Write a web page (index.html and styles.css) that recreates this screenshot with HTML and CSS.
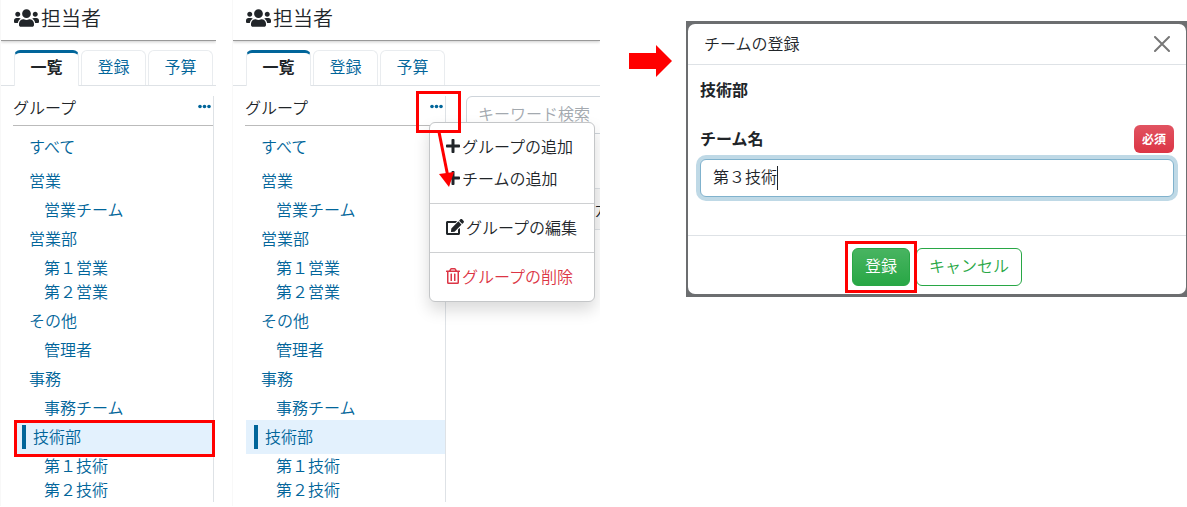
FILE: index.html
```html
<!DOCTYPE html>
<html lang="ja">
<head>
<meta charset="utf-8">
<title>担当者</title>
<link rel="stylesheet" href="styles.css">
</head>
<body>
<svg class="sprite" aria-hidden="true">
  <symbol id="users" viewBox="0 0 640 512"><path d="M96 224c35.300 0 64-28.700 64-64s-28.700-64-64-64-64 28.700-64 64 28.700 64 64 64zm448 0c35.300 0 64-28.700 64-64s-28.700-64-64-64-64 28.700-64 64 28.700 64 64 64zm32 32h-64c-17.600 0-33.500 7.100-45.100 18.600 40.300 22.100 68.900 62 75.100 109.400h66c17.700 0 32-14.300 32-32v-32c0-35.300-28.700-64-64-64zm-256 0c61.900 0 112-50.100 112-112S381.900 32 320 32 208 82.100 208 144s50.100 112 112 112zm76.800 32h-8.300c-20.800 10-43.900 16-68.500 16s-47.600-6-68.500-16h-8.300C179.600 288 128 339.600 128 403.200V432c0 26.500 21.500 48 48 48h288c26.500 0 48-21.500 48-48v-28.800c0-63.600-51.600-115.200-115.200-115.200zm-223.700-13.400C161.500 263.100 145.600 256 128 256H64c-35.300 0-64 28.700-64 64v32c0 17.700 14.300 32 32 32h65.900c6.300-47.400 34.900-87.300 75.200-109.400z"/></symbol>
  <symbol id="dots" viewBox="0 0 13 5"><circle cx="2" cy="2.500" r="1.800"/><circle cx="6.500" cy="2.500" r="1.800"/><circle cx="11" cy="2.500" r="1.800"/></symbol>
  <symbol id="plus" viewBox="0 0 448 512"><path d="M416 208H272V64c0-17.670-14.330-32-32-32h-32c-17.670 0-32 14.330-32 32v144H32c-17.670 0-32 14.330-32 32v32c0 17.670 14.330 32 32 32h144v144c0 17.670 14.330 32 32 32h32c17.670 0 32-14.330 32-32V304h144c17.670 0 32-14.330 32-32v-32c0-17.670-14.330-32-32-32z"/></symbol>
  <symbol id="edit" viewBox="0 0 576 512"><path d="M402.600 83.200l90.200 90.200c3.800 3.800 3.800 10 0 13.800L274.400 405.600l-92.800 10.300c-12.400 1.400-22.900-9.100-21.500-21.500l10.300-92.800L388.800 83.200c3.800-3.800 10-3.800 13.800 0zm162-22.900l-48.800-48.800c-15.200-15.200-39.900-15.200-55.200 0l-35.400 35.400c-3.800 3.800-3.800 10 0 13.800l90.200 90.200c3.800 3.800 10 3.800 13.800 0l35.400-35.400c15.200-15.300 15.200-40 0-55.200zM384 346.200V448H64V128h229.800c3.200 0 6.200-1.300 8.500-3.500l40-40c7.600-7.600 2.200-20.500-8.500-20.500H48C21.500 64 0 85.500 0 112v352c0 26.500 21.500 48 48 48h352c26.500 0 48-21.500 48-48V306.200c0-10.700-12.900-16-20.500-8.500l-40 40c-2.200 2.300-3.500 5.300-3.500 8.500z"/></symbol>
  <symbol id="trash" viewBox="0 0 448 512"><path d="M268 416h24a12 12 0 0 0 12-12V188a12 12 0 0 0-12-12h-24a12 12 0 0 0-12 12v216a12 12 0 0 0 12 12zM432 80h-82.410l-34-56.700A48 48 0 0 0 274.410 0H173.590a48 48 0 0 0-41.160 23.300L98.410 80H16A16 16 0 0 0 0 96v16a16 16 0 0 0 16 16h16v336a48 48 0 0 0 48 48h288a48 48 0 0 0 48-48V128h16a16 16 0 0 0 16-16V96a16 16 0 0 0-16-16zM171.840 50.910A6 6 0 0 1 177 48h94a6 6 0 0 1 5.150 2.910L293.610 80H154.390zM368 464H80V128h288zm-212-48h24a12 12 0 0 0 12-12V188a12 12 0 0 0-12-12h-24a12 12 0 0 0-12 12v216a12 12 0 0 0 12 12z"/></symbol>
</svg>
<main class="steps">
  <section class="panel panel-narrow">
    <header class="panel-head"><svg class="icon-users"><use href="#users"/></svg><h1>担当者</h1></header>
    <nav class="tabs"><a class="tab tab-active" href="#">一覧</a><a class="tab" href="#">登録</a><a class="tab" href="#">予算</a></nav>
    <div class="content">
      <aside class="sidebar">
        <div class="group-head"><h2>グループ</h2><button class="more" type="button" aria-label="メニュー"><svg class="icon-dots"><use href="#dots"/></svg></button></div>
        <ul class="tree">
          <li class="group"><a href="#">すべて</a></li>
          <li class="group"><a href="#">営業</a></li>
          <li class="team"><a href="#">営業チーム</a></li>
          <li class="group"><a href="#">営業部</a></li>
          <li class="team"><a href="#">第１営業</a></li>
          <li class="team"><a href="#">第２営業</a></li>
          <li class="group"><a href="#">その他</a></li>
          <li class="team"><a href="#">管理者</a></li>
          <li class="group"><a href="#">事務</a></li>
          <li class="team"><a href="#">事務チーム</a></li>
          <li class="group selected"><a href="#">技術部</a><span class="mark mark-row"></span></li>
          <li class="team"><a href="#">第１技術</a></li>
          <li class="team"><a href="#">第２技術</a></li>
        </ul>
      </aside>
    </div>
  </section>

  <section class="panel panel-wide">
    <header class="panel-head"><svg class="icon-users"><use href="#users"/></svg><h1>担当者</h1></header>
    <nav class="tabs"><a class="tab tab-active" href="#">一覧</a><a class="tab" href="#">登録</a><a class="tab" href="#">予算</a></nav>
    <div class="content">
      <aside class="sidebar">
        <div class="group-head">
          <h2>グループ</h2><button class="more" type="button" aria-label="メニュー"><svg class="icon-dots"><use href="#dots"/></svg></button>
          <div class="menu">
            <button type="button"><svg class="icon-14"><use href="#plus"/></svg>グループの追加</button>
            <button type="button"><svg class="icon-14"><use href="#plus"/></svg>チームの追加</button>
            <hr>
            <button type="button"><svg class="icon-18"><use href="#edit"/></svg>グループの編集</button>
            <hr>
            <button class="danger" type="button"><svg class="icon-14"><use href="#trash"/></svg>グループの削除</button>
          </div>
          <span class="mark mark-more"></span>
          <svg class="pointer" viewBox="0 0 20 58"><path d="M4 1 13 46" stroke="#f00" stroke-width="3"/><path d="M4 43 19 41 14 56z" fill="#f00"/></svg>
        </div>
        <ul class="tree">
          <li class="group"><a href="#">すべて</a></li>
          <li class="group"><a href="#">営業</a></li>
          <li class="team"><a href="#">営業チーム</a></li>
          <li class="group"><a href="#">営業部</a></li>
          <li class="team"><a href="#">第１営業</a></li>
          <li class="team"><a href="#">第２営業</a></li>
          <li class="group"><a href="#">その他</a></li>
          <li class="team"><a href="#">管理者</a></li>
          <li class="group"><a href="#">事務</a></li>
          <li class="team"><a href="#">事務チーム</a></li>
          <li class="group selected"><a href="#">技術部</a></li>
          <li class="team"><a href="#">第１技術</a></li>
          <li class="team"><a href="#">第２技術</a></li>
        </ul>
      </aside>
      <div class="list">
        <input class="search" type="search" placeholder="キーワード検索" aria-label="キーワード検索">
        <table class="grid"><thead><tr><th>カ</th></tr></thead></table>
      </div>
    </div>
  </section>

  <svg class="next" viewBox="0 0 43 32"><path d="M0 8H27V0L43 16 27 32V24H0z" fill="#f00"/></svg>

  <section class="backdrop">
    <form class="dialog">
      <header class="dialog-head"><h2>チームの登録</h2><button class="close" type="button" aria-label="閉じる"><svg class="icon-close" viewBox="0 0 16 16"><path d="M1 1 15 15M15 1 1 15" stroke="#777" stroke-width="2" stroke-linecap="round"/></svg></button></header>
      <div class="dialog-body">
        <p class="department">技術部</p>
        <div class="label-row"><label for="team">チーム名</label><span class="badge">必須</span></div>
        <div class="field"><input id="team" type="text" value="第３技術"><span class="caret"></span></div>
      </div>
      <footer class="dialog-foot">
        <span class="save"><button class="button primary" type="button">登録</button><span class="mark mark-save"></span></span>
        <button class="button outline" type="button">キャンセル</button>
      </footer>
    </form>
  </section>
</main>
</body>
</html>
```

FILE: styles.css
```css
* { box-sizing: border-box; }
body {
  margin: 0;
  background: #fff;
  color: #212529;
  font: 350 16px/24px "Noto Sans CJK JP", "Noto Sans", sans-serif;
}
h1, h2, p, ul { margin: 0; padding: 0; font-weight: inherit; }
h2 { font-size: 16px; }
button, input { font: inherit; color: inherit; }
button { margin: 0; padding: 0; border: 0; background: none; }
a { color: #01659a; text-decoration: none; }
svg { display: block; flex: none; fill: currentColor; }
.sprite { position: absolute; width: 0; height: 0; }

.steps { display: flex; align-items: flex-start; }
.panel { flex: none; overflow: hidden; border-left: 1px solid #f8f8f8; padding-bottom: 4px; }
.panel-narrow { width: 216px; margin-right: 16px; }
.panel-wide { width: 368px; }

.panel-head {
  display: flex;
  align-items: center;
  height: 41px;
  padding: 0 0 4px 13px;
  border-bottom: 1px solid #999;
  box-shadow: 0 1px 3px #ccc;
}
.panel-head h1 { font-size: 20px; margin-left: 2px; }
.icon-users { width: 25px; height: 20px; }

.tabs {
  display: flex;
  gap: 2px;
  height: 45px;
  padding: 9px 0 0 13px;
  border-bottom: 1px solid #dee2e6;
}
.tab {
  width: 65px;
  height: 35px;
  padding-top: 3px;
  border: 1px solid #e9ecef;
  border-bottom: 0;
  border-radius: 6px 6px 0 0;
  text-align: center;
}
.tab-active {
  height: 36px;
  padding-top: 1px;
  border-top: 3px solid #01659a;
  background: #fff;
  color: #212529;
  font-weight: 700;
}

.content { display: flex; padding: 10px 0 0 12px; }
.sidebar { flex: none; width: 201px; border-right: 1px solid #dee2e6; }
.group-head {
  position: relative;
  display: flex;
  justify-content: space-between;
  align-items: center;
  height: 30px;
  padding: 0 2px 8px 0;
  border-bottom: 1px solid #bbb;
}
.more { padding: 4px 0; color: #01659a; }
.icon-dots { width: 13px; height: 5px; }
.tree { list-style: none; padding-top: 4px; }
.tree li { position: relative; margin-left: 1px; }
.group { padding: 5px 0 5px 8px; }
.team { padding-left: 23px; }
.tree a { display: block; padding: 0 0 2px 7px; line-height: 22px; }
.selected { background: #e3f1fd; }
.selected a { border-left: 4px solid #01659a; }

.mark { position: absolute; border: 3px solid #f00; pointer-events: none; }
.mark-row { inset: 0 -2px -3px 0; }
.mark-more { z-index: 2; top: -5px; left: 171px; width: 45px; height: 42px; }
.pointer { position: absolute; z-index: 2; top: 35px; left: 190px; width: 20px; height: 58px; }
.mark-save { inset: -7px; }

.menu {
  position: absolute;
  z-index: 1;
  top: 26px;
  left: 184px;
  width: 166px;
  padding: 8px 0;
  border: 1px solid #c4c6c8;
  border-radius: 6px;
  background: #fff;
  box-shadow: 0 8px 16px #00000026;
}
.menu button { display: flex; align-items: center; width: 100%; height: 32px; padding: 0 0 3px 16px; white-space: nowrap; }
.menu hr { margin: 8px 0; border: 0; border-top: 1px solid #ced0d2; }
.menu .danger { color: #dc3545; }
.icon-14 { width: 14px; height: 16px; margin-right: 2px; }
.icon-18 { width: 18px; height: 16px; margin-right: 2px; }

.list { flex: none; width: 300px; padding-left: 20px; }
.search {
  display: block;
  width: 100%;
  height: 38px;
  padding: 0 11px 4px;
  border: 1px solid #ced4da;
  border-radius: 6px;
  background: #fff;
  appearance: none;
}
.search::placeholder { color: #a3a9af; opacity: 1; }
.grid { width: 100%; margin-top: 54px; border-collapse: collapse; }
.grid th {
  height: 41px;
  padding: 0 0 0 128px;
  border-top: 1px solid #dee2e6;
  border-bottom: 1px solid #dee2e6;
  background: #f7f7f7;
  font-weight: 350;
  text-align: left;
}

.next { width: 43px; height: 32px; margin: 45px 14px 0 29px; }

.backdrop { flex: 1; min-width: 0; margin-top: 21px; padding: 3px 1px 3px 2px; background: #6c6e70; }
.dialog { border-radius: 7px; background: #fff; }
.dialog-head {
  display: flex;
  justify-content: space-between;
  align-items: center;
  height: 41px;
  padding: 0 16px 3px;
  border-bottom: 1px solid #dee2e6;
}
.close { padding-top: 3px; }
.close svg { width: 16px; height: 16px; }
.dialog-body { padding: 12px 12px 38px; }
.department, .label-row label { font-weight: 700; }
.label-row { display: flex; justify-content: space-between; align-items: center; padding: 24px 0 6px; }
.label-row label { padding-bottom: 2px; }
.badge {
  padding: 2px 8px;
  border-radius: 6px;
  background: linear-gradient(#e15361, #dc3545);
  color: #fff;
  font-size: 12px;
  font-weight: 700;
}
.field { position: relative; }
.field input {
  display: block;
  width: 100%;
  height: 38px;
  padding: 0 12px 4px;
  border: 1px solid #80b2cd;
  border-radius: 6px;
  outline: 0;
  background: #fff;
  box-shadow: 0 0 0 4px #bfd9e6;
}
.caret { position: absolute; top: 7px; left: 77px; width: 1px; height: 24px; background: #212529; }
.dialog-foot {
  display: flex;
  justify-content: center;
  gap: 6px;
  padding: 12px 12px 8px;
  border-top: 1px solid #dee2e6;
}
.save { position: relative; }
.button { display: block; height: 38px; padding: 0 12px 5px; border: 1px solid #28a745; border-radius: 6px; white-space: nowrap; }
.primary { background: linear-gradient(#48b461, #28a745); color: #fff; }
.outline { background: #fff; color: #28a745; }
```
